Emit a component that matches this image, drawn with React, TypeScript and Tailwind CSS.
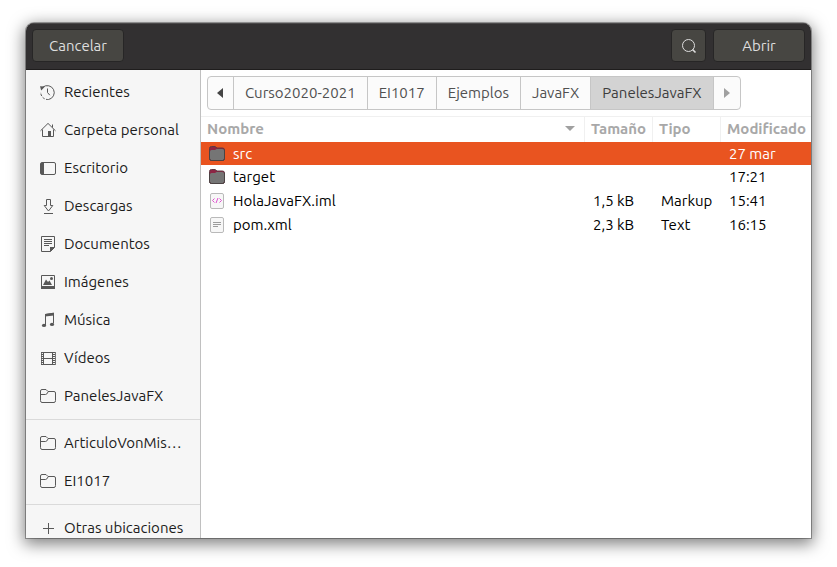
import React from "react";

type IconName =
  | "recent" | "home" | "desktop" | "download" | "document"
  | "image" | "music" | "video" | "folder" | "plus";

const shapes: Record<IconName, React.ReactNode> = {
  recent: (
    <>
      <path d="M2.8 3.2A7 7 0 1 1 8.5 15.5" />
      <path d="M8.5 15.5A7 7 0 0 1 .8 8" strokeDasharray="2.5 1.5" />
      <path d="M7.5 4.5V8.5L9.8 11.2" />
      <path d="M0 2.2L5 2.6L1.2 6.4Z" fill="currentColor" stroke="none" />
    </>
  ),
  home: (
    <>
      <path d="M.5 8.8L8 1.4L15.5 8.8M2.5 7.5V14.5H13.5V7.5M12.5 2.5V5.5" />
      <path d="M8 9H11V14.5H8Z" fill="currentColor" stroke="none" />
    </>
  ),
  desktop: (
    <>
      <rect x="0.5" y="2.5" width="15" height="12" rx="1.5" />
      <path d="M1 3H4V14H1Z" fill="currentColor" stroke="none" />
    </>
  ),
  download: <path d="M6.5 1.5H10.5V7.5H12.8L8.5 13L4.2 7.5H6.5ZM4 15.5H13" />,
  document: (
    <>
      <path d="M1.5 .5H14.5V11.5L10.5 15.5H1.5ZM4 3.5H12M4 5.5H12M4 7.5H12M4 9.5H9" />
      <path d="M10 11H15L10 16Z" fill="currentColor" stroke="none" />
    </>
  ),
  image: (
    <>
      <path d="M1.5 1.5H14.5V14.5H1.5Z" />
      <path d="M1 12H15V15H1ZM3 11L6 5.5L8 8L9.5 6.5L12 11Z" fill="currentColor" stroke="none" />
      <circle cx="11.5" cy="4.5" r="1.5" fill="currentColor" stroke="none" />
    </>
  ),
  music: (
    <>
      <path d="M5.5 13V2.5L13.5 1.2V11.5" />
      <path d="M5 2L14 .8V3.6L5 4.6Z" fill="currentColor" stroke="none" />
      <ellipse cx="4" cy="13.4" rx="2.1" ry="1.7" fill="currentColor" stroke="none" />
      <ellipse cx="12" cy="12.4" rx="2.1" ry="1.7" fill="currentColor" stroke="none" />
    </>
  ),
  video: (
    <>
      <path d="M3.5 2V15M12.5 2V15M3.5 2.5H12.5M3.5 8.5H12.5M3.5 14.5H12.5" />
      <path d="M2 2V15M14 2V15" strokeDasharray="1 1" strokeWidth="2" />
      <path d="M1.5 2V15M15.5 2V15" strokeWidth="0.8" />
    </>
  ),
  folder: (
    <>
      <path d="M.5 12.5V3Q.5 1.5 2 1.5H6L8 3.5H14Q15.5 3.5 15.5 5V12.5Q15.5 14.5 14 14.5H2Q.5 14.5 .5 12.5Z" />
      <path d="M.5 6.5H5.5Q7 6.5 8 4" />
    </>
  ),
  plus: <path d="M3 8.5H14M8.5 3V14" />,
};

function Icon({ name }: { name: IconName }) {
  return (
    <svg viewBox="0 0 16 16" className="h-4 w-4 shrink-0 text-[#585858]" fill="none" stroke="currentColor" aria-hidden="true">
      {shapes[name]}
    </svg>
  );
}

const groups: { icon: IconName; label: string }[][] = [
  [
    { icon: "recent", label: "Recientes" },
    { icon: "home", label: "Carpeta personal" },
    { icon: "desktop", label: "Escritorio" },
    { icon: "download", label: "Descargas" },
    { icon: "document", label: "Documentos" },
    { icon: "image", label: "Imágenes" },
    { icon: "music", label: "Música" },
    { icon: "video", label: "Vídeos" },
    { icon: "folder", label: "PanelesJavaFX" },
  ],
  [
    { icon: "folder", label: "ArticuloVonMis…" },
    { icon: "folder", label: "EI1017" },
  ],
  [{ icon: "plus", label: "Otras ubicaciones" }],
];

function FileIcon({ kind }: { kind: string }) {
  if (kind === "folder") {
    return (
      <svg viewBox="0 0 16 16" className="h-4 w-4" aria-hidden="true">
        <path d="M.5 2.5Q.5 .5 2.5 .5H6L8 2H13.5Q15.5 2 15.5 4V12.5Q15.5 14.5 13.5 14.5H2.5Q.5 14.5 .5 12.5Z" fill="#8d2544" stroke="#5c3a42" />
        <path d="M1 5.5Q1 4 2.5 4H6L7.5 3H13.5Q15 3 15 4.5V12.5Q15 14 13.5 14H2.5Q1 14 1 12.5Z" fill="#757575" />
        <path d="M.5 5V12.5Q.5 14.5 2.5 14.5H13.5Q15.5 14.5 15.5 12.5V4" fill="none" stroke="#4a4444" />
      </svg>
    );
  }
  return (
    <svg viewBox="0 0 16 16" className="h-4 w-4" fill="none" aria-hidden="true">
      <rect x="1.5" y=".5" width="13" height="15" rx="1.5" fill="#f7f7f7" stroke="#b9b9b9" />
      {kind === "markup" ? (
        <path d="M5.5 5.5L3.5 7.5L5.5 9.5M10.5 5.5L12.5 7.5L10.5 9.5M9 5L7 10" stroke="#e04fd0" />
      ) : (
        <path d="M4 5.5H12M4 7.5H12M4 9.5H9" stroke="#9c9c9c" />
      )}
    </svg>
  );
}

const files = [
  { kind: "folder", name: "src", size: "", type: "", date: "27 mar", selected: true },
  { kind: "folder", name: "target", size: "", type: "", date: "17:21" },
  { kind: "markup", name: "HolaJavaFX.iml", size: "1,5 kB", type: "Markup", date: "15:41" },
  { kind: "text", name: "pom.xml", size: "2,3 kB", type: "Text", date: "16:15" },
];

const crumbs = ["Curso2020-2021", "EI1017", "Ejemplos", "JavaFX", "PanelesJavaFX"];

const headerButton =
  "flex h-[33px] items-center justify-center rounded border border-[#272626] bg-[#474642] text-[#dedede]";

export default function App() {
  return (
    <div className="h-screen bg-white px-[26px] pt-[23px] pb-[29px] font-['Ubuntu','Noto_Sans',sans-serif] text-[15px] leading-5">
      <div className="flex h-full flex-col overflow-hidden rounded-t-lg bg-white shadow-[0_0_0_1px_#00000050,0_4px_16px_2px_#00000080]">
        <header className="flex h-[47px] shrink-0 items-center gap-[7px] border-b border-[#1f1d1d] bg-[#323031] px-[6px] pb-px shadow-[inset_0_1px_#4a4849]">
          <button className={`${headerButton} w-[92px]`}>Cancelar</button>
          <button className={`${headerButton} ml-auto w-[35px]`} aria-label="Buscar">
            <svg viewBox="0 0 16 16" className="h-4 w-4" fill="none" stroke="currentColor" aria-hidden="true">
              <circle cx="7.5" cy="7.5" r="6" />
              <path d="M11.5 11.5L14.5 14.5" strokeWidth="1.6" />
            </svg>
          </button>
          <button className={`${headerButton} w-[92px]`}>Abrir</button>
        </header>

        <div className="flex min-h-0 flex-1">
          <nav className="w-[175px] shrink-0 overflow-hidden border-r border-[#c0c0c0] bg-[#f6f6f6] pt-[3px] text-[#1c1c1c]">
            {groups.map((group, i) => (
              <ul key={i} className={i > 0 ? "mt-1 border-t border-[#dadada] pt-1" : ""}>
                {group.map((item) => (
                  <li key={item.label}>
                    <a href="#" className="flex h-[38px] items-center gap-2 pl-[14px] whitespace-nowrap">
                      <Icon name={item.icon} />
                      {item.label}
                    </a>
                  </li>
                ))}
              </ul>
            ))}
          </nav>

          <main className="min-w-0 flex-1">
            <div className="flex p-[6px]">
              <div className="flex h-[34px] divide-x divide-[#c6c6c6] overflow-hidden rounded border border-[#c6c6c6] bg-[#fbfbfb] text-[#505050]">
                <button className="flex w-[26px] items-center justify-center pr-[2px]" aria-label="Anterior">
                  <svg viewBox="0 0 6 10" className="h-[10px] w-[6px]" aria-hidden="true">
                    <path d="M6 0V10L0 5Z" fill="#454545" />
                  </svg>
                </button>
                {crumbs.map((c, i) => (
                  <button
                    key={c}
                    className={`px-[11px] ${i === crumbs.length - 1 ? "bg-[#d3d3d3] text-[#3d3d3d]" : ""}`}
                  >
                    {c}
                  </button>
                ))}
                <button className="flex w-[26px] items-center justify-center" aria-label="Siguiente">
                  <svg viewBox="0 0 6 10" className="h-[10px] w-[6px]" aria-hidden="true">
                    <path d="M0 0V10L6 5Z" fill="#a0a0a0" />
                  </svg>
                </button>
              </div>
            </div>

            <table className="w-full table-fixed border-separate border-spacing-0 text-left whitespace-nowrap">
              <colgroup>
                <col />
                <col className="w-[68px]" />
                <col className="w-[68px]" />
                <col className="w-[90px]" />
              </colgroup>
              <thead className="text-[#a8a8a8]">
                <tr className="h-[26px] *:border-t *:border-[#f0f0f0] *:pt-0 *:pb-[2px] *:pl-[6px] *:font-bold">
                  <th className="border-r pr-[9px]">
                    <span className="flex items-center justify-between">
                      Nombre
                      <svg viewBox="0 0 10 5" className="h-[5px] w-[10px]" aria-hidden="true">
                        <path d="M0 0H10L5 5Z" fill="#a0a0a0" />
                      </svg>
                    </span>
                  </th>
                  <th className="border-r pr-0">Tamaño</th>
                  <th className="border-r pr-0">Tipo</th>
                  <th className="pr-0">Modificado</th>
                </tr>
              </thead>
              <tbody>
                {files.map((f) => (
                  <tr
                    key={f.name}
                    className={`*:p-0 ${f.selected ? "h-[23px] bg-[#e95420] text-white" : "h-6 text-black"}`}
                  >
                    <td>
                      <span className="flex items-center gap-2 pl-2">
                        <FileIcon kind={f.kind} />
                        {f.name}
                      </span>
                    </td>
                    <td><span className="pl-2">{f.size}</span></td>
                    <td><span className="pl-2">{f.type}</span></td>
                    <td><span className="pl-2">{f.date}</span></td>
                  </tr>
                ))}
              </tbody>
            </table>
          </main>
        </div>
      </div>
    </div>
  );
}
